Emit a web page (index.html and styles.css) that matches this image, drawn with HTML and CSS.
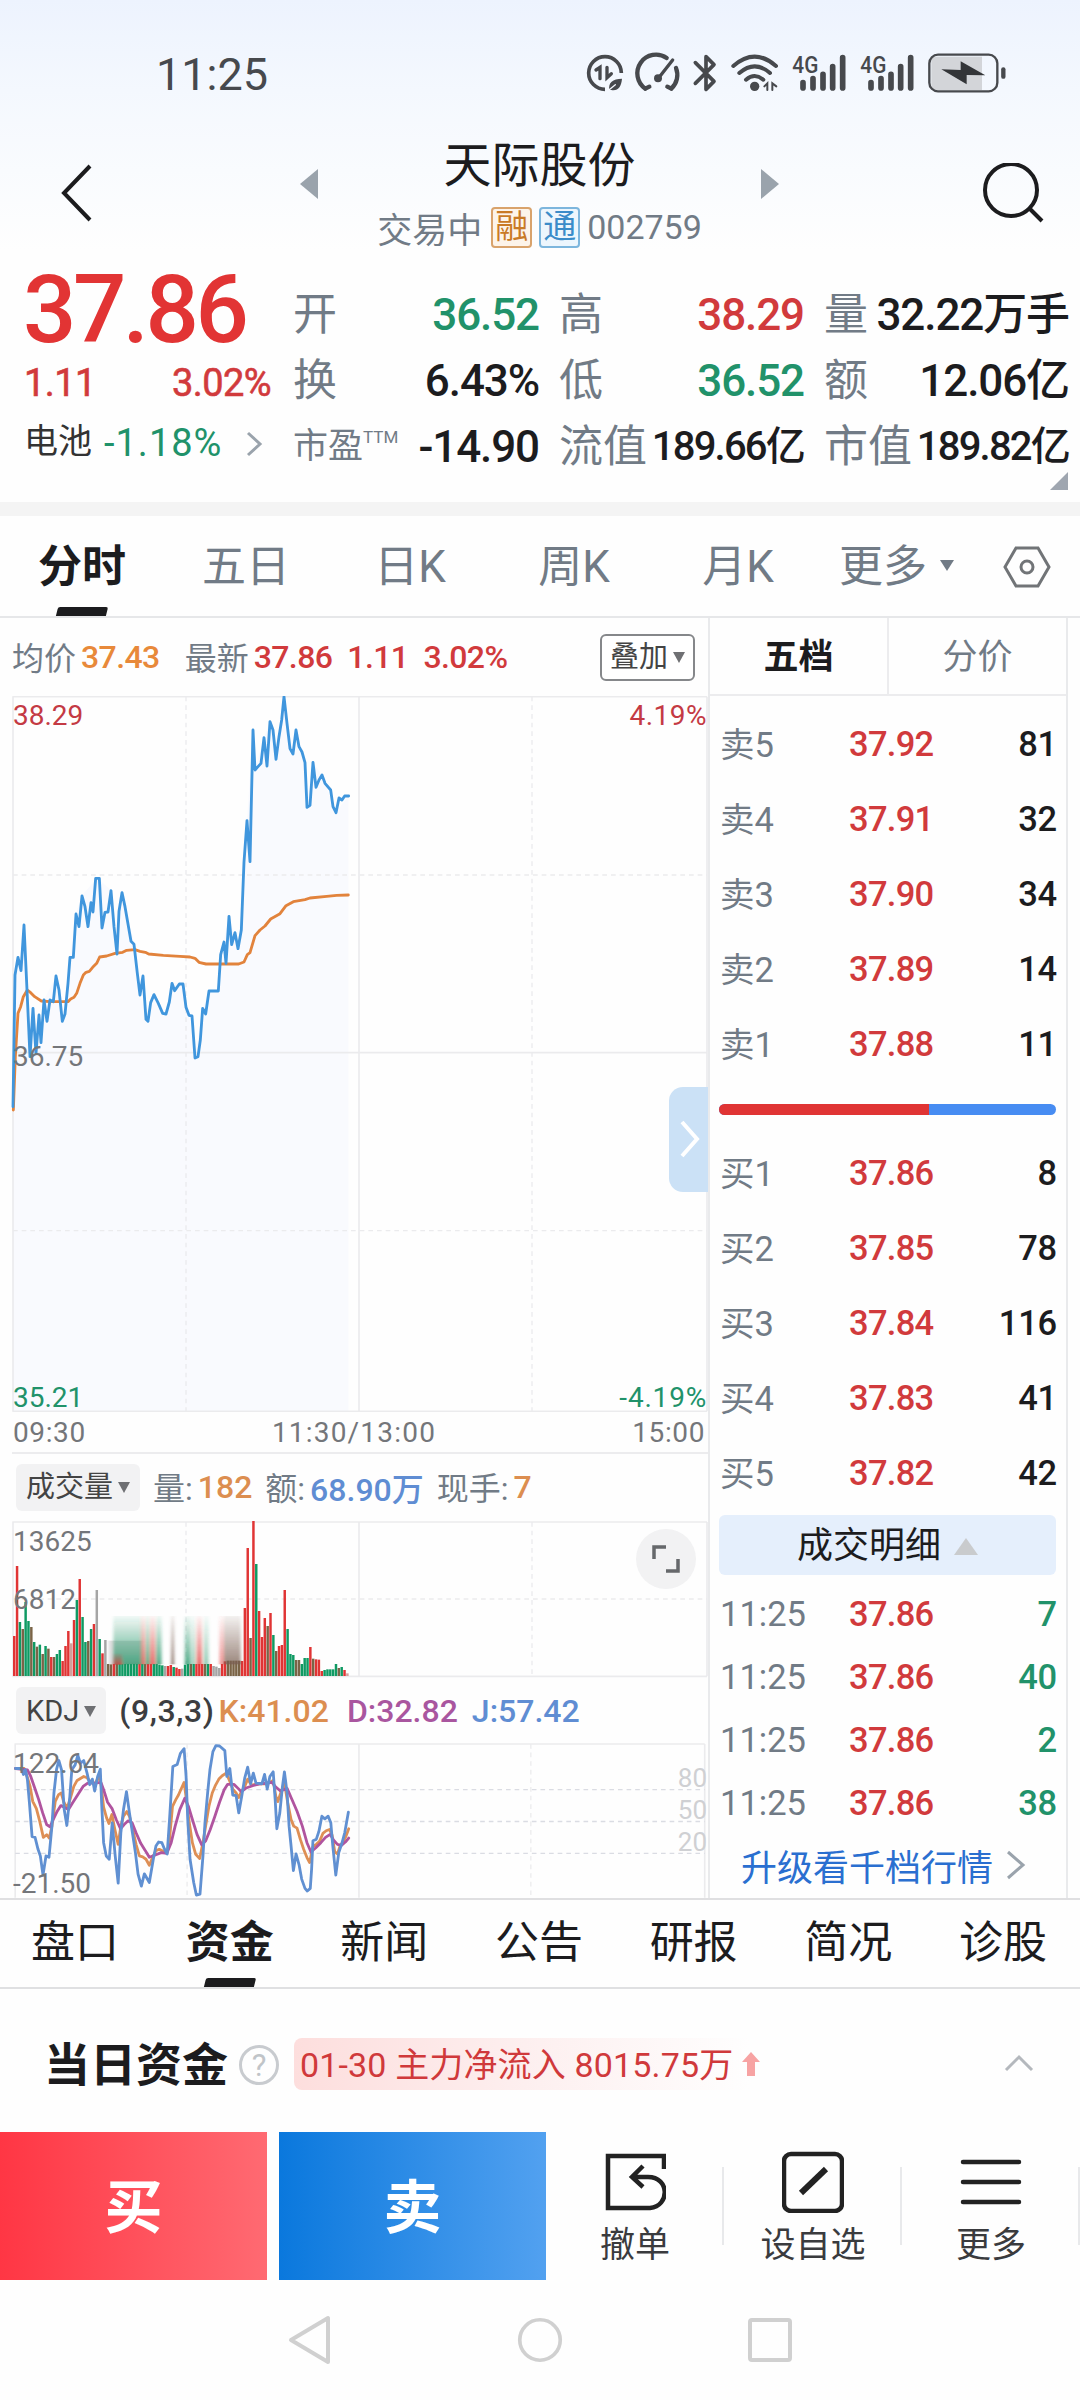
FILE: index.html
```html
<!DOCTYPE html>
<html lang="zh-CN">
<head>
    <meta charset="UTF-8">
    <meta name="viewport" content="width=device-width, initial-scale=1.0">
    <title>天际股份 002759</title>
    <link rel="stylesheet" href="styles.css">
</head>
<body>
    <div class="head">
        <div class="status">
            <span class="clock">11:25</span>
            <svg class="status-icons" viewBox="0 0 1350 210" fill="none" stroke="#47494d" stroke-width="11" stroke-linecap="round">
                <!-- data saver -->
                <path d="M105 148a49 49 0 1 1 49-49" stroke-linecap="butt"/>
                <path d="M78 90l12-8v34M111 82v31l13-12" stroke-width="10"/>
                <path d="M118 150c-4-22 10-34 38-34c-2 24-12 38-32 34z" fill="#47494d" stroke="none"/>
                <path d="M112 154l24-20" stroke="#f5f8fe" stroke-width="4"/>
                <!-- gauge -->
                <path d="M226 146l12-6M226 146a56 56 0 0 1 64-92M304 146l-12-6M304 146a56 56 0 0 0 14-62" stroke-width="13"/>
                <path d="M264 116l44-56" stroke-width="10"/>
                <circle cx="264" cy="115" r="12" fill="#47494d" stroke="none"/>
                <!-- bluetooth -->
                <path d="M376 68l56 56l-24 24v-98l24 24l-56 56" stroke-linejoin="round"/>
                <!-- wifi -->
                <path d="M490 78q64-56 128 0M508 99q46-40 92 0M528 119q26-22 52 0" stroke-width="12"/>
                <circle cx="554" cy="139" r="14" fill="#47494d" stroke="none"/>
                <path d="M583 139l9-9v20M607 150v-20l12 9" stroke-width="6"/>
                <!-- signal -->
                <g id="signal">
                    <path d="M699 128v16M729 116v28M759 103v41M788 80v64M818 53v91" stroke-width="17"/>
                    <text x="667" y="98" font-size="70" font-weight="500" textLength="78" lengthAdjust="spacingAndGlyphs" fill="#47494d" stroke="none">4G</text>
                </g>
                <use href="#signal" x="204"/>
                <!-- battery -->
                <rect x="1084" y="50" width="152" height="100" fill="#d3d5d9" stroke="none"/>
                <rect x="1078" y="44" width="204" height="110" rx="26" stroke-width="7"/>
                <path d="M1114 88l58 2v-26l74 42l-56-1v28z" fill="#333538" stroke="none"/>
                <path d="M1300 88v22" stroke-width="13"/>
            </svg>
        </div>
        <div class="nav">
            <svg class="icon-back" viewBox="0 0 32 58"><path d="M29 2L3 29l26 27"/></svg>
            <svg class="icon-prev" viewBox="0 0 18 30"><path d="M18 0v30L0 15z"/></svg>
            <div class="stock">
                <div class="stock-name">天际股份</div>
                <div class="stock-sub">
                    <span>交易中</span><span class="tag orange">融</span><span class="tag blue">通</span><span class="code">002759</span>
                </div>
            </div>
            <svg class="icon-next" viewBox="0 0 18 30"><path d="M0 0v30l18-15z"/></svg>
            <svg class="icon-search" viewBox="0 0 62 60"><circle cx="28" cy="27" r="26"/><path d="M46 45l13 13"/></svg>
        </div>
    </div>

    <div class="quote">
        <div class="price-box">
            <div class="price">37.86</div>
            <div class="change"><span>1.11</span><span>3.02%</span></div>
            <div class="sector">
                <span>电池</span><span class="green sector-pct">-1.18%</span>
                <svg viewBox="0 0 17 26"><path d="M2 2l12 11L2 24"/></svg>
            </div>
        </div>
        <div class="cells">
            <div class="cell"><label>开</label><b class="green">36.52</b></div>
            <div class="cell"><label>高</label><b class="red">38.29</b></div>
            <div class="cell"><label>量</label><b>32.22万手</b></div>
            <div class="cell"><label>换</label><b>6.43%</b></div>
            <div class="cell"><label>低</label><b class="green">36.52</b></div>
            <div class="cell"><label>额</label><b>12.06亿</b></div>
            <div class="cell"><label class="pe">市盈<sup>TTM</sup></label><b>-14.90</b></div>
            <div class="cell"><label>流值</label><b class="small">189.66亿</b></div>
            <div class="cell"><label>市值</label><b class="small">189.82亿</b></div>
        </div>
        <i class="corner"></i>
    </div>

    <div class="period">
        <span class="active">分时</span>
        <span>五日</span>
        <span>日K</span>
        <span>周K</span>
        <span>月K</span>
        <span class="more">更多<i class="down"></i></span>
        <svg viewBox="0 0 48 42"><path d="M13 2h22l11 19l-11 19H13L2 21z"/><circle cx="24" cy="21" r="6"/></svg>
    </div>

    <div class="main">
        <div class="charts">
            <div class="legend">
                <span>均价</span><b class="orange-t">37.43</b>
                <span class="latest">最新</span><b class="red">37.86</b><b class="red gap">1.11</b><b class="red gap">3.02%</b>
                <button class="overlay">叠加<i class="down"></i></button>
            </div>
            <div class="chart price-chart">
                <svg viewBox="0 48 2124 2148">
                    <path class="area" d="M39 1280L45 885L54 830L63 870L72 735L90 1130L99 985L108 1100L132 960L168 888L187 1024L210 832L228 700L246 645L292 595L333 630L351 820L366 636L403 792L420 945L443 1024L462 944L495 1002L516 910L548 910L567 1006L585 1135L608 985L627 932H655L670 785L687 708L714 807L741 420L759 150L765 270L792 172L810 125L828 238L852 50L879 222L888 150L915 250L921 382L939 246L965 284L1008 397L1045 348V2194H39z"/>
                    <g class="grid">
                        <path d="M37 50H2121M37 1118H2121M37 2194H2121M39 50V2194M1077 50V2194M2121 50V2194"/>
                        <path class="dash" d="M39 585H2121M39 1652H2121M558 50V2194M1596 50V2194"/>
                    </g>
                    <polyline class="avg" points="40,1290 46,1130 54,1000 62,980 70,950 82,930 92,938 104,950 124,963 150,965 204,965 212,957 222,952 230,940 240,910 250,885 258,877 268,874 278,862 290,850 299,831 320,828 345,820 368,817 380,811 405,809 420,814 436,817 446,822 490,826 540,829 570,831 585,835 597,847 618,852 716,852 732,846 742,824 750,818 765,767 780,750 795,738 812,717 840,701 858,677 880,665 915,659 930,654 980,649 1010,646 1045,645"/>
                    <polyline class="line" points="39,1280 45,885 54,832 63,872 72,735 81,930 90,1130 99,985 108,1120 117,1005 123,1088 132,960 141,1024 150,960 160,965 168,888 177,930 187,1024 195,1002 204,910 210,832 220,832 228,702 237,740 246,648 255,680 264,740 273,668 279,696 287,595 298,595 306,744 315,697 324,696 333,632 342,740 351,822 357,694 366,638 375,680 393,784 402,793 412,880 420,945 429,888 438,1018 444,1024 452,968 462,944 475,970 488,1000 498,1002 508,966 516,910 524,932 538,912 549,912 558,982 567,1006 576,1008 585,1134 594,1130 601,1080 608,985 617,1002 627,933 655,933 662,824 672,786 678,850 687,709 695,794 705,758 714,806 724,750 732,546 741,422 750,545 759,150 765,270 774,260 783,250 792,173 801,258 810,125 819,150 828,238 837,170 845,120 852,50 861,130 870,206 879,222 888,150 897,200 906,216 915,248 921,382 930,376 939,247 948,322 957,300 966,285 975,310 992,330 999,380 1008,398 1017,354 1026,360 1034,348 1046,348"/>
                </svg>
                <span class="mark top-left red">38.29</span>
                <span class="mark top-right red">4.19%</span>
                <span class="mark mid-left">36.75</span>
                <span class="mark bottom-left green">35.21</span>
                <span class="mark bottom-right green">-4.19%</span>
                <div class="drawer"><svg viewBox="0 0 20 38"><path d="M2 2l15 17L2 36"/></svg></div>
            </div>
            <div class="times"><span>09:30</span><span class="noon">11:30/13:00</span><span>15:00</span></div>

            <div class="legend sub">
                <button class="pick">成交量<i class="down"></i></button>
                <span>量:</span><b class="k">182</b><span class="gap2">额:</span><b class="j">68.90万</b><span class="gap2">现手:</span><b class="k">7</b>
            </div>
            <div class="chart vol-chart">
                <svg viewBox="0 30 2124 474">
                    <defs>
                        <linearGradient id="fadeG" x1="0" y1="0" x2="0" y2="1"><stop offset="0" stop-color="#1f9365" stop-opacity=".05"/><stop offset="1" stop-color="#1f9365" stop-opacity=".75"/></linearGradient>
                        <linearGradient id="fadeR" x1="0" y1="0" x2="0" y2="1"><stop offset="0" stop-color="#e23a3a" stop-opacity=".05"/><stop offset="1" stop-color="#e23a3a" stop-opacity=".75"/></linearGradient>
                        <linearGradient id="fadeD" x1="0" y1="0" x2="0" y2="1"><stop offset="0" stop-color="#7a5f52" stop-opacity=".08"/><stop offset="1" stop-color="#7a5f52" stop-opacity=".75"/></linearGradient>
                        <filter id="soft" x="-5%" width="110%"><feGaussianBlur stdDeviation="5 1"/></filter>
                    </defs>
                    <g class="grid">
                        <path d="M37 36H2121M37 499H2121M39 36V499M1077 36V499M2121 36V499"/>
                        <path class="dash" d="M39 267H2121M558 36V499M1596 36V499"/>
                    </g>
                    <g id="bars"></g>
                    <g filter="url(#soft)">
                        <rect x="326" y="392" width="100" height="70" fill="#777" opacity=".25"/>
                        <rect x="340" y="318" width="86" height="145" fill="url(#fadeG)"/>
                        <rect x="340" y="430" width="26" height="34" fill="url(#fadeR)"/>
                        <rect x="424" y="318" width="12" height="145" fill="url(#fadeR)"/>
                        <rect x="436" y="318" width="14" height="145" fill="url(#fadeG)"/>
                        <rect x="450" y="318" width="16" height="145" fill="url(#fadeR)"/>
                        <rect x="467" y="318" width="18" height="145" fill="url(#fadeG)"/>
                        <rect x="513" y="318" width="10" height="145" fill="url(#fadeD)"/>
                        <rect x="554" y="318" width="18" height="145" fill="url(#fadeG)"/>
                        <rect x="575" y="318" width="12" height="145" fill="url(#fadeG)" opacity=".6"/>
                        <rect x="590" y="318" width="16" height="145" fill="url(#fadeR)"/>
                        <rect x="610" y="318" width="16" height="145" fill="url(#fadeG)" opacity=".6"/>
                        <rect x="658" y="318" width="14" height="145" fill="url(#fadeR)" opacity=".7"/>
                        <rect x="672" y="318" width="50" height="145" fill="url(#fadeD)"/>
                    </g>
                </svg>
                <span class="mark vol-top">13625</span>
                <span class="mark vol-mid">6812</span>
                <div class="expand"><svg viewBox="0 0 28 28"><path d="M2 14V2h12M26 14v12H14"/></svg></div>
            </div>

            <div class="legend sub kdj">
                <button class="pick">KDJ<i class="down"></i></button>
                <b class="param">(9,3,3)</b><b class="k">K:41.02</b><b class="d">D:32.82</b><b class="j">J:57.42</b>
            </div>
            <div class="chart kdj-chart">
                <svg viewBox="0 699 2124 468">
                    <g class="grid">
                        <path d="M37 702H2121M39 702V1166M1077 702V1166M2121 702V1166"/>
                        <path class="dash" d="M558 702V1166M1596 702V1166"/>
                        <path class="dash dark" d="M39 840H2121M39 936H2121M39 1032H2121"/>
                    </g>
                    <polyline class="kl" points="40,776 66,776 75,800 84,830 92,875 103,897 113,935 124,984 134,976 142,986 150,950 160,875 170,855 178,850 186,878 196,895 206,865 216,830 226,812 236,806 246,800 256,804 266,816 280,822 292,800 299,830 306,893 315,925 322,942 331,915 340,960 350,1005 358,950 366,920 376,906 384,920 394,960 404,1005 414,1040 424,1043 434,1050 444,1068 454,1044 464,1024 474,1020 486,1026 497,1032 504,1000 514,890 524,870 532,856 540,838 549,818 556,870 564,935 574,1000 584,1035 596,1048 606,1000 614,950 624,890 634,850 644,826 654,808 664,798 676,790 686,812 696,838 706,850 714,864 722,846 732,830 741,808 752,826 776,822 800,822 818,812 826,860 832,876 842,846 852,820 862,880 872,930 880,950 890,956 900,990 910,1020 920,1045 928,1060 938,1012 948,1005 958,996 968,972 978,964 988,960 996,978 1004,1028 1012,1034 1020,1010 1030,995 1038,980 1046,958"/>
                    <polyline class="dl" points="40,776 76,780 86,800 98,835 110,870 122,910 134,945 144,952 154,930 166,905 177,888 188,894 200,900 212,880 228,855 244,830 258,820 280,820 298,818 306,840 318,878 332,898 344,930 357,958 368,945 380,934 392,940 404,970 418,1002 432,1024 444,1044 460,1038 480,1030 497,1032 510,1000 522,950 536,900 551,866 562,890 574,930 588,975 602,1006 614,995 628,960 642,920 656,878 670,840 680,824 700,824 712,836 722,846 736,835 756,828 780,822 814,818 826,832 840,844 860,836 874,868 890,905 906,950 920,1000 932,1028 946,1016 962,1000 976,984 990,975 1000,992 1012,1005 1024,1008 1036,998 1046,986"/>
                    <polyline class="jl" points="40,776 58,776 64,794 70,780 76,810 82,880 90,982 99,984 108,1020 115,1040 123,1098 132,1040 141,1044 150,950 156,850 164,778 171,752 179,780 187,900 195,948 204,860 210,780 220,765 228,736 236,760 246,752 256,790 264,825 272,808 279,844 288,800 296,778 300,880 306,1000 314,1040 323,1050 332,940 341,1040 350,1122 358,970 366,900 375,846 384,910 393,970 402,1030 410,1095 420,1131 429,1094 444,1120 456,1050 464,1010 472,998 482,1000 490,1020 498,1034 505,930 515,770 528,764 538,730 549,716 555,800 560,930 567,1050 578,1120 586,1158 597,1155 606,1040 612,940 620,850 627,780 636,725 645,707 656,708 672,722 678,800 687,776 696,856 706,858 714,910 723,860 732,805 741,772 750,822 758,790 766,820 784,822 792,794 800,838 808,800 818,786 824,870 829,958 838,910 846,830 852,786 860,850 866,950 872,1010 879,1084 887,1034 896,1066 904,1110 914,1138 921,1146 930,1138 934,1080 938,994 948,990 956,966 965,920 974,928 984,920 992,940 998,1010 1007,1098 1016,1030 1026,1000 1034,970 1045,908"/>
                </svg>
                <span class="mark k-max">122.64</span>
                <span class="mark k-min">-21.50</span>
                <span class="mark level l80">80</span>
                <span class="mark level l50">50</span>
                <span class="mark level l20">20</span>
            </div>
        </div>

        <div class="book">
            <div class="book-tabs"><span class="active">五档</span><span>分价</span></div>
            <div class="rows">
                <div class="row"><span>卖5</span><b class="red">37.92</b><b>81</b></div>
                <div class="row"><span>卖4</span><b class="red">37.91</b><b>32</b></div>
                <div class="row"><span>卖3</span><b class="red">37.90</b><b>34</b></div>
                <div class="row"><span>卖2</span><b class="red">37.89</b><b>14</b></div>
                <div class="row"><span>卖1</span><b class="red">37.88</b><b>11</b></div>
            </div>
            <div class="ratio"><i style="width: 62.2%"></i></div>
            <div class="rows">
                <div class="row"><span>买1</span><b class="red">37.86</b><b>8</b></div>
                <div class="row"><span>买2</span><b class="red">37.85</b><b>78</b></div>
                <div class="row"><span>买3</span><b class="red">37.84</b><b>116</b></div>
                <div class="row"><span>买4</span><b class="red">37.83</b><b>41</b></div>
                <div class="row"><span>买5</span><b class="red">37.82</b><b>42</b></div>
            </div>
            <div class="detail">成交明细<i class="up"></i></div>
            <div class="trades">
                <div class="row"><span>11:25</span><b class="red">37.86</b><b class="green">7</b></div>
                <div class="row"><span>11:25</span><b class="red">37.86</b><b class="green">40</b></div>
                <div class="row"><span>11:25</span><b class="red">37.86</b><b class="green">2</b></div>
                <div class="row"><span>11:25</span><b class="red">37.86</b><b class="green">38</b></div>
            </div>
            <div class="upgrade">升级看千档行情<svg viewBox="0 0 20 30"><path d="M2 2l15 13L2 28"/></svg></div>
        </div>
    </div>

    <div class="info-tabs">
        <span>盘口</span>
        <span class="active">资金</span>
        <span>新闻</span>
        <span>公告</span>
        <span>研报</span>
        <span>简况</span>
        <span>诊股</span>
    </div>

    <div class="funds">
        <h2>当日资金</h2>
        <span class="help">?</span>
        <div class="flow">
            <span>01-30 主力净流入 8015.75万</span>
            <svg viewBox="0 0 18 24"><path d="M9 0l9 10h-5v14H5V10H0z"/></svg>
        </div>
        <svg class="fold" viewBox="0 0 30 18"><path d="M2 16L15 3l13 13"/></svg>
    </div>

    <div class="actions">
        <button class="buy">买</button>
        <button class="sell">卖</button>
        <div class="action">
            <svg viewBox="0 0 62 62"><path d="M60 18V5H4v52h42c20-2 20-31-2-31H29M39 15L28 26l11 10"/></svg>
            <span>撤单</span>
        </div>
        <div class="action">
            <svg viewBox="0 0 62 62"><rect x="2" y="3" width="58" height="57" rx="7"/><path d="M19 42l25-24" stroke-width="6"/></svg>
            <span>设自选</span>
        </div>
        <div class="action">
            <svg viewBox="0 0 62 62"><path d="M3 11h56M3 31h56M3 51h56" stroke-linecap="round"/></svg>
            <span>更多</span>
        </div>
    </div>

    <div class="sysbar">
        <svg viewBox="0 0 46 50"><path d="M41 3v44L4 25z"/></svg>
        <svg viewBox="0 0 50 50"><circle cx="25" cy="25" r="22"/></svg>
        <svg viewBox="0 0 46 46"><rect x="3" y="3" width="40" height="40" rx="2"/></svg>
    </div>

    <script>
        // 每分钟成交量: 颜色 + 高度
        const colors = { r: '#e03434', g: '#0f9a63', d: '#7a6447', n: '#a5a5a5', p: '#d3a09d' };
        const vol = 'r120 r330 g162 d141 g222 g165 d147 g102 d88 g94 d66 g90 d82 r57 d57 g66 g78 r45 r90 r135 p98 r168 g228 r291 g177 g102 d105 g141 r156 n258 g111 r68 n108 '
            + 'd36 d35 r36 d36 g36 g36 g36 g36 g36 g36 g36 r36 g36 d36 r36 r36 g36 g36 g34 g32 n30 r30 r33 g27 r25 r21 n22 '
            + 'g34 g36 d36 g36 r36 r36 r36 d36 g36 r36 n30 n28 n24 r36 r44 d46 d46 d46 d46 d46 r45 '
            + 'r204 r384 d114 r465 g336 r195 r117 r174 d150 r189 g123 d75 r90 r93 r258 g141 g66 g63 d48 d48 g36 g54 g54 r87 d52 r50 r49 r15 g18 g20 g20 g20 g36 d24 g27 r18 p8';
        let bars = '';
        const list = vol.split(' ');
        const step = 1008 / list.length;
        list.forEach((v, i) => {
            const h = Number(v.slice(1));
            bars += `<rect x="${(39 + i * step).toFixed(1)}" y="${498 - h}" width="7.4" height="${h}" fill="${colors[v[0]]}"/>`;
        });
        document.getElementById('bars').innerHTML = bars;
    </script>
</body>
</html>
```
FILE: styles.css
```css
* {
    box-sizing: border-box;
}
body {
    margin: 0;
    width: 1080px;
    height: 2400px;
    background: #fefefe;
    color: #1c1c1e;
    font-family: Roboto, "Noto Sans CJK SC", sans-serif;
    overflow: hidden;
}
svg {
    display: block;
    flex: none;
}
b {
    font-weight: 500;
}
button {
    border: 0;
    padding: 0;
    font-family: inherit;
}
.red {
    color: #d13a3c;
}
.green {
    color: #21926a;
}

/* 顶部 */
.head {
    height: 262px;
    background: linear-gradient(#edf3fe, #f4f8fe 90px, #fefefe 250px);
}
.status {
    height: 125px;
    padding: 40px 60px 0 156px;
    display: flex;
    justify-content: space-between;
}
.clock {
    font-size: 45px;
    line-height: 69px;
    color: #47494d;
}
.status-icons {
    width: 450px;
    height: 70px;
}
.nav {
    height: 137px;
    padding: 0 35px 0 61px;
    display: flex;
    align-items: flex-start;
}
.nav svg {
    fill: none;
    stroke: #1c1c1e;
    stroke-width: 4;
}
.icon-back {
    width: 32px;
    height: 58px;
    margin-top: 39px;
}
.nav .icon-prev,
.nav .icon-next {
    width: 18px;
    height: 30px;
    margin-top: 44px;
    fill: #9aa3ac;
    stroke: none;
}
.icon-prev {
    margin-left: 207px;
}
.icon-search {
    width: 62px;
    height: 60px;
    margin: 38px 0 0 auto;
}
.stock {
    width: 443px;
    text-align: center;
}
.stock-name {
    font-size: 48px;
    line-height: 64px;
    margin-top: 9px;
}
.stock-sub {
    display: flex;
    justify-content: center;
    align-items: center;
    margin-top: 8px;
    height: 42px;
    font-size: 35px;
    color: #717b86;
}
.tag {
    width: 41px;
    height: 41px;
    margin-left: 9px;
    border: 2px solid #d9a36c;
    border-radius: 4px;
    font-size: 33px;
    line-height: 36px;
    color: #c97a26;
    background: #fdf4ea;
}
.tag.blue {
    margin-left: 7px;
    border-color: #7db6dd;
    color: #3b8cc9;
    background: #edf6fd;
}
.code {
    font-size: 34px;
    margin-left: 7px;
}

/* 报价 */
.quote {
    height: 240px;
    padding: 0 11px 0 26px;
    display: flex;
    position: relative;
}
.price-box {
    width: 245px;
}
.price {
    height: 92px;
    font-size: 94px;
    line-height: 96px;
    font-weight: 500;
    letter-spacing: -3.5px;
    color: #e23434;
    margin-left: -3px;
}
.change {
    height: 56px;
    margin-left: -2px;
    display: flex;
    justify-content: space-between;
    font-size: 38px;
    line-height: 58px;
    letter-spacing: -.6px;
    color: #d13a3c;
    -webkit-text-stroke: .6px #d13a3c;
}
.sector {
    height: 66px;
    margin-left: -2px;
    display: flex;
    align-items: center;
    font-size: 34px;
    line-height: 60px;
    color: #333;
}
.sector span:first-child {
    margin-top: -4px;
}
.sector-pct {
    margin-left: 12px;
    font-size: 38px;
    letter-spacing: 1px;
}
.sector svg {
    width: 17px;
    height: 26px;
    margin: 1px 0 0 auto;
    position: relative;
    right: 8px;
    fill: none;
    stroke: #9aa3ac;
    stroke-width: 3;
}
.cells {
    margin: 20px 0 0 22px;
    display: grid;
    grid-template-columns: 246px 245px 245px;
    grid-auto-rows: 66px;
    column-gap: 20px;
}
.cell {
    display: flex;
    justify-content: space-between;
    align-items: center;
    line-height: 66px;
    white-space: nowrap;
    font-size: 44px;
}
.cell label {
    color: #717b86;
    font-size: 44px;
}
.cell b {
    letter-spacing: -1.1px;
}
.cell b.small {
    font-size: 40px;
    letter-spacing: -1.8px;
}
.cell label.pe {
    font-size: 35px;
}
.pe sup {
    font-size: 17px;
    line-height: 1;
    position: relative;
    top: -2px;
    vertical-align: 13px;
}
.corner {
    position: absolute;
    right: 12px;
    bottom: 12px;
    border-left: 18px solid transparent;
    border-bottom: 18px solid #9fa6b0;
}

/* 周期 */
.period {
    height: 116px;
    border-top: 14px solid #f4f4f4;
    border-bottom: 2px solid #e6e7e9;
    display: flex;
    font-size: 44px;
    line-height: 103px;
    color: #717b86;
}
.period span {
    width: 164px;
    height: 100px;
    text-align: center;
}
.period .more {
    width: 183px;
    padding-left: 19px;
    text-align: left;
}
.period .active,
.info-tabs .active {
    color: #1c1c1e;
    font-weight: 700;
    position: relative;
}
.period .active::after,
.info-tabs .active::after {
    content: "";
    position: absolute;
    left: 50%;
    bottom: 0;
    width: 50px;
    height: 9px;
    margin-left: -25px;
    background: #1c1c1e;
    transform: skewX(-14deg);
    border-radius: 2px 2px 0 0;
}
.period svg {
    width: 48px;
    height: 42px;
    margin-top: 30px;
    fill: none;
    stroke: #717477;
    stroke-width: 3;
}
.down,
.up {
    display: inline-block;
    border: 7px solid transparent;
    border-bottom: 0;
    border-top: 11px solid #717b86;
    margin-left: 13px;
    vertical-align: 11px;
}
.up {
    border: 12px solid transparent;
    border-top: 0;
    border-bottom: 17px solid #c9cbcd;
    vertical-align: 3px;
}

/* 图表 */
.main {
    height: 1282px;
    display: flex;
    border-bottom: 2px solid #dfdfe1;
}
.charts {
    width: 708px;
}
.legend {
    height: 78px;
    padding: 0 13px 0 12px;
    display: flex;
    align-items: center;
    font-size: 32px;
    color: #717b86;
    white-space: nowrap;
}
.legend span {
    margin-top: -2px;
}
.legend span + b {
    margin-left: 5px;
}
.legend b {
    letter-spacing: -.6px;
}
.legend .latest {
    margin-left: 25px;
}
.legend .gap {
    margin-left: 15px;
}
.orange-t {
    color: #e8893a;
}
.legend button {
    color: #444;
    font-size: 29px;
    height: 47px;
    line-height: 46px;
}
.legend .down {
    border-width: 11px 6px 0;
    border-top-color: #6f7073;
    margin-left: 5px;
    vertical-align: 4px;
}
.legend .overlay {
    width: 95px;
    margin-left: auto;
    background: #fff;
    border: 2px solid #85878a;
    border-radius: 6px;
    line-height: 42px;
}
.chart {
    position: relative;
    width: 708px;
}
.chart > svg {
    width: 708px;
    height: 100%;
    fill: none;
}
.price-chart {
    height: 716px;
}
.vol-chart {
    height: 158px;
}
.kdj-chart {
    height: 155px;
}
.grid path {
    stroke: #ebebed;
    stroke-width: 5;
}
.grid .dash {
    stroke-width: 4;
    stroke-dasharray: 14 12;
}
.grid .dash.dark {
    stroke: #dadce3;
}
.area {
    fill: #f9fafe;
}
.line,
.avg,
.kl,
.dl,
.jl {
    stroke-width: 8.5;
    stroke-linejoin: round;
    stroke-linecap: round;
}
.line {
    stroke: #4096dd;
}
.avg {
    stroke: #e2833c;
}
.kl {
    stroke: #de8f55;
}
.dl {
    stroke: #b0549f;
}
.jl {
    stroke: #6090d2;
}
.mark {
    position: absolute;
    left: 13px;
    font-size: 28px;
    line-height: 32px;
    color: #74767a;
}
.mark.red {
    color: #c43a44;
}
.mark.green {
    color: #21926a;
}
.top-left {
    top: 4px;
}
.top-right {
    top: 4px;
    left: auto;
    right: 1px;
    letter-spacing: .5px;
}
.mid-left {
    top: 345px;
}
.bottom-left {
    top: 686px;
}
.bottom-right {
    top: 686px;
    left: auto;
    right: 1px;
    letter-spacing: .8px;
}
.drawer {
    position: absolute;
    right: 0;
    top: 391px;
    width: 39px;
    height: 105px;
    border-radius: 14px 0 0 14px;
    background: #cbe1f6;
    padding: 33px 0 0 11px;
}
.drawer svg {
    width: 20px;
    height: 38px;
    fill: none;
    stroke: #fff;
    stroke-width: 4;
}
.times {
    height: 42px;
    margin-left: 12px;
    padding: 0 3px 0 1px;
    display: flex;
    justify-content: space-between;
    border-bottom: 2px solid #ececee;
    font-size: 28px;
    line-height: 41px;
    letter-spacing: .6px;
    color: #74767a;
}
.noon {
    letter-spacing: 1.2px;
    margin-right: 10px;
}
.legend.sub {
    height: 66px;
    padding-left: 16px;
}
.pick {
    background: #f2f2f3;
    border-radius: 6px;
    padding: 0 10px;
    margin-right: 13px;
}
.k {
    color: #dc8e50;
}
.d {
    color: #a9569f;
}
.j {
    color: #5f8dd3;
}
.gap2 {
    margin-left: 13px;
}
.legend.sub b {
    letter-spacing: 0;
}
.legend.kdj {
    height: 65px;
}
.legend.sub .param {
    color: #3c3d40;
    margin-right: 4px;
    letter-spacing: .6px;
}
.kdj .d {
    margin-left: 18px;
}
.kdj .j {
    margin-left: 14px;
}
.vol-top {
    top: 6px;
}
.vol-mid {
    top: 64px;
}
.expand {
    position: absolute;
    left: 636px;
    top: 9px;
    width: 60px;
    height: 60px;
    border-radius: 50%;
    background: #f2f2f3;
    padding: 16px;
}
.expand svg {
    width: 28px;
    height: 28px;
    fill: none;
    stroke: #66686b;
    stroke-width: 3.5;
}
.k-max {
    top: 5px;
}
.k-min {
    top: 125px;
}
.mark.level {
    left: auto;
    right: 1px;
    font-size: 26px;
    color: #cfd0d3;
}
.l80 {
    top: 19px;
}
.l50 {
    top: 51px;
}
.l20 {
    top: 83px;
}

/* 盘口 */
.book {
    width: 360px;
    border: solid #e9eaec;
    border-width: 0 2px;
}
.book-tabs {
    display: flex;
    height: 78px;
    border-bottom: 2px solid #ececee;
    font-size: 35px;
    line-height: 79px;
    text-align: center;
    color: #717b86;
}
.book-tabs span {
    flex: 1;
    height: 76px;
}
.book-tabs .active {
    color: #1c1c1e;
    font-weight: 700;
    border-right: 2px solid #ececee;
}
.rows {
    padding: 10px 9px 0 10px;
}
.row {
    height: 75px;
    display: grid;
    grid-template-columns: 129px 110px 1fr;
    align-items: center;
    font-size: 34.5px;
}
.row span {
    color: #717b86;
    margin-top: -3px;
}
.row b {
    letter-spacing: -.7px;
}
.row b:last-child {
    text-align: right;
    letter-spacing: -.2px;
}
.ratio {
    height: 11px;
    margin: 23px 10px 0 9px;
    border-radius: 6px;
    background: #478cf2;
    overflow: hidden;
}
.ratio i {
    display: block;
    height: 11px;
    background: #e03434;
}
.ratio + .rows {
    padding-top: 20px;
}
.detail {
    height: 60px;
    margin: 5px 10px 7px 9px;
    border-radius: 6px;
    background: #e5effc;
    text-align: center;
    font-size: 36px;
    line-height: 62px;
}
.trades {
    padding: 0 9px 0 10px;
}
.trades .row {
    height: 63px;
}
.trades .row span {
    margin-top: 0;
}
.upgrade {
    display: flex;
    align-items: center;
    height: 62px;
    padding-left: 31px;
    font-size: 36px;
    color: #2a6fd0;
}
.upgrade svg {
    width: 20px;
    height: 30px;
    margin-left: 13px;
    fill: none;
    stroke: #9aa3ac;
    stroke-width: 3;
}

/* 资讯 */
.info-tabs {
    display: flex;
    justify-content: space-between;
    height: 89px;
    padding: 0 33px 0 31px;
    border-bottom: 2px solid #dfe0e2;
    font-size: 44px;
    line-height: 86px;
}
.info-tabs span {
    height: 87px;
}
.funds {
    height: 143px;
    padding: 5px 46px 0 44px;
    display: flex;
    align-items: center;
}
.funds h2 {
    margin: -4px 0 0;
    font-size: 46px;
    font-weight: 700;
}
.help {
    width: 40px;
    height: 40px;
    margin: 4px 0 0 11px;
    border: 3px solid #c8cbcf;
    border-radius: 50%;
    font-size: 31px;
    line-height: 35px;
    text-align: center;
    color: #c0c4c8;
}
.flow {
    display: flex;
    align-items: center;
    width: 480px;
    height: 52px;
    margin: 2px 0 0 15px;
    padding-left: 6px;
    border-radius: 8px;
    background: linear-gradient(90deg, #fddedd, #fdeeee 45%, #fefefe 95%);
    font-size: 34px;
    letter-spacing: .15px;
    white-space: nowrap;
    color: #d0393b;
}
.flow span {
    margin-top: -3px;
}
.flow svg {
    width: 18px;
    height: 24px;
    margin-left: 9px;
    fill: #f7a3a3;
}
.fold {
    width: 30px;
    height: 18px;
    margin-left: auto;
    fill: none;
    stroke: #b4b8bd;
    stroke-width: 3;
}

/* 底部 */
.actions {
    height: 148px;
    display: flex;
}
.actions button {
    width: 267px;
    padding-bottom: 6px;
    font-size: 58px;
    font-weight: 700;
    color: #fff;
}
.buy {
    background: linear-gradient(90deg, #ff3644, #ff6a72);
}
.sell {
    margin-left: 12px;
    background: linear-gradient(90deg, #0a78dd, #52a1f0);
}
.action {
    width: 178px;
    padding-top: 19px;
    display: flex;
    flex-direction: column;
    align-items: center;
    background: linear-gradient(#e8e9eb, #e8e9eb) right 35px / 2px 78px no-repeat;
    font-size: 35px;
    line-height: 66px;
    color: #3a3b3e;
}
.action svg {
    width: 62px;
    height: 62px;
    fill: none;
    stroke: #222;
    stroke-width: 4.5;
}
.sysbar {
    height: 120px;
    display: flex;
    justify-content: center;
    align-items: center;
    gap: 184px;
}
.sysbar svg {
    width: 46px;
    height: 50px;
    fill: none;
    stroke: #d0d0d0;
    stroke-width: 4;
    stroke-linejoin: round;
}
```
